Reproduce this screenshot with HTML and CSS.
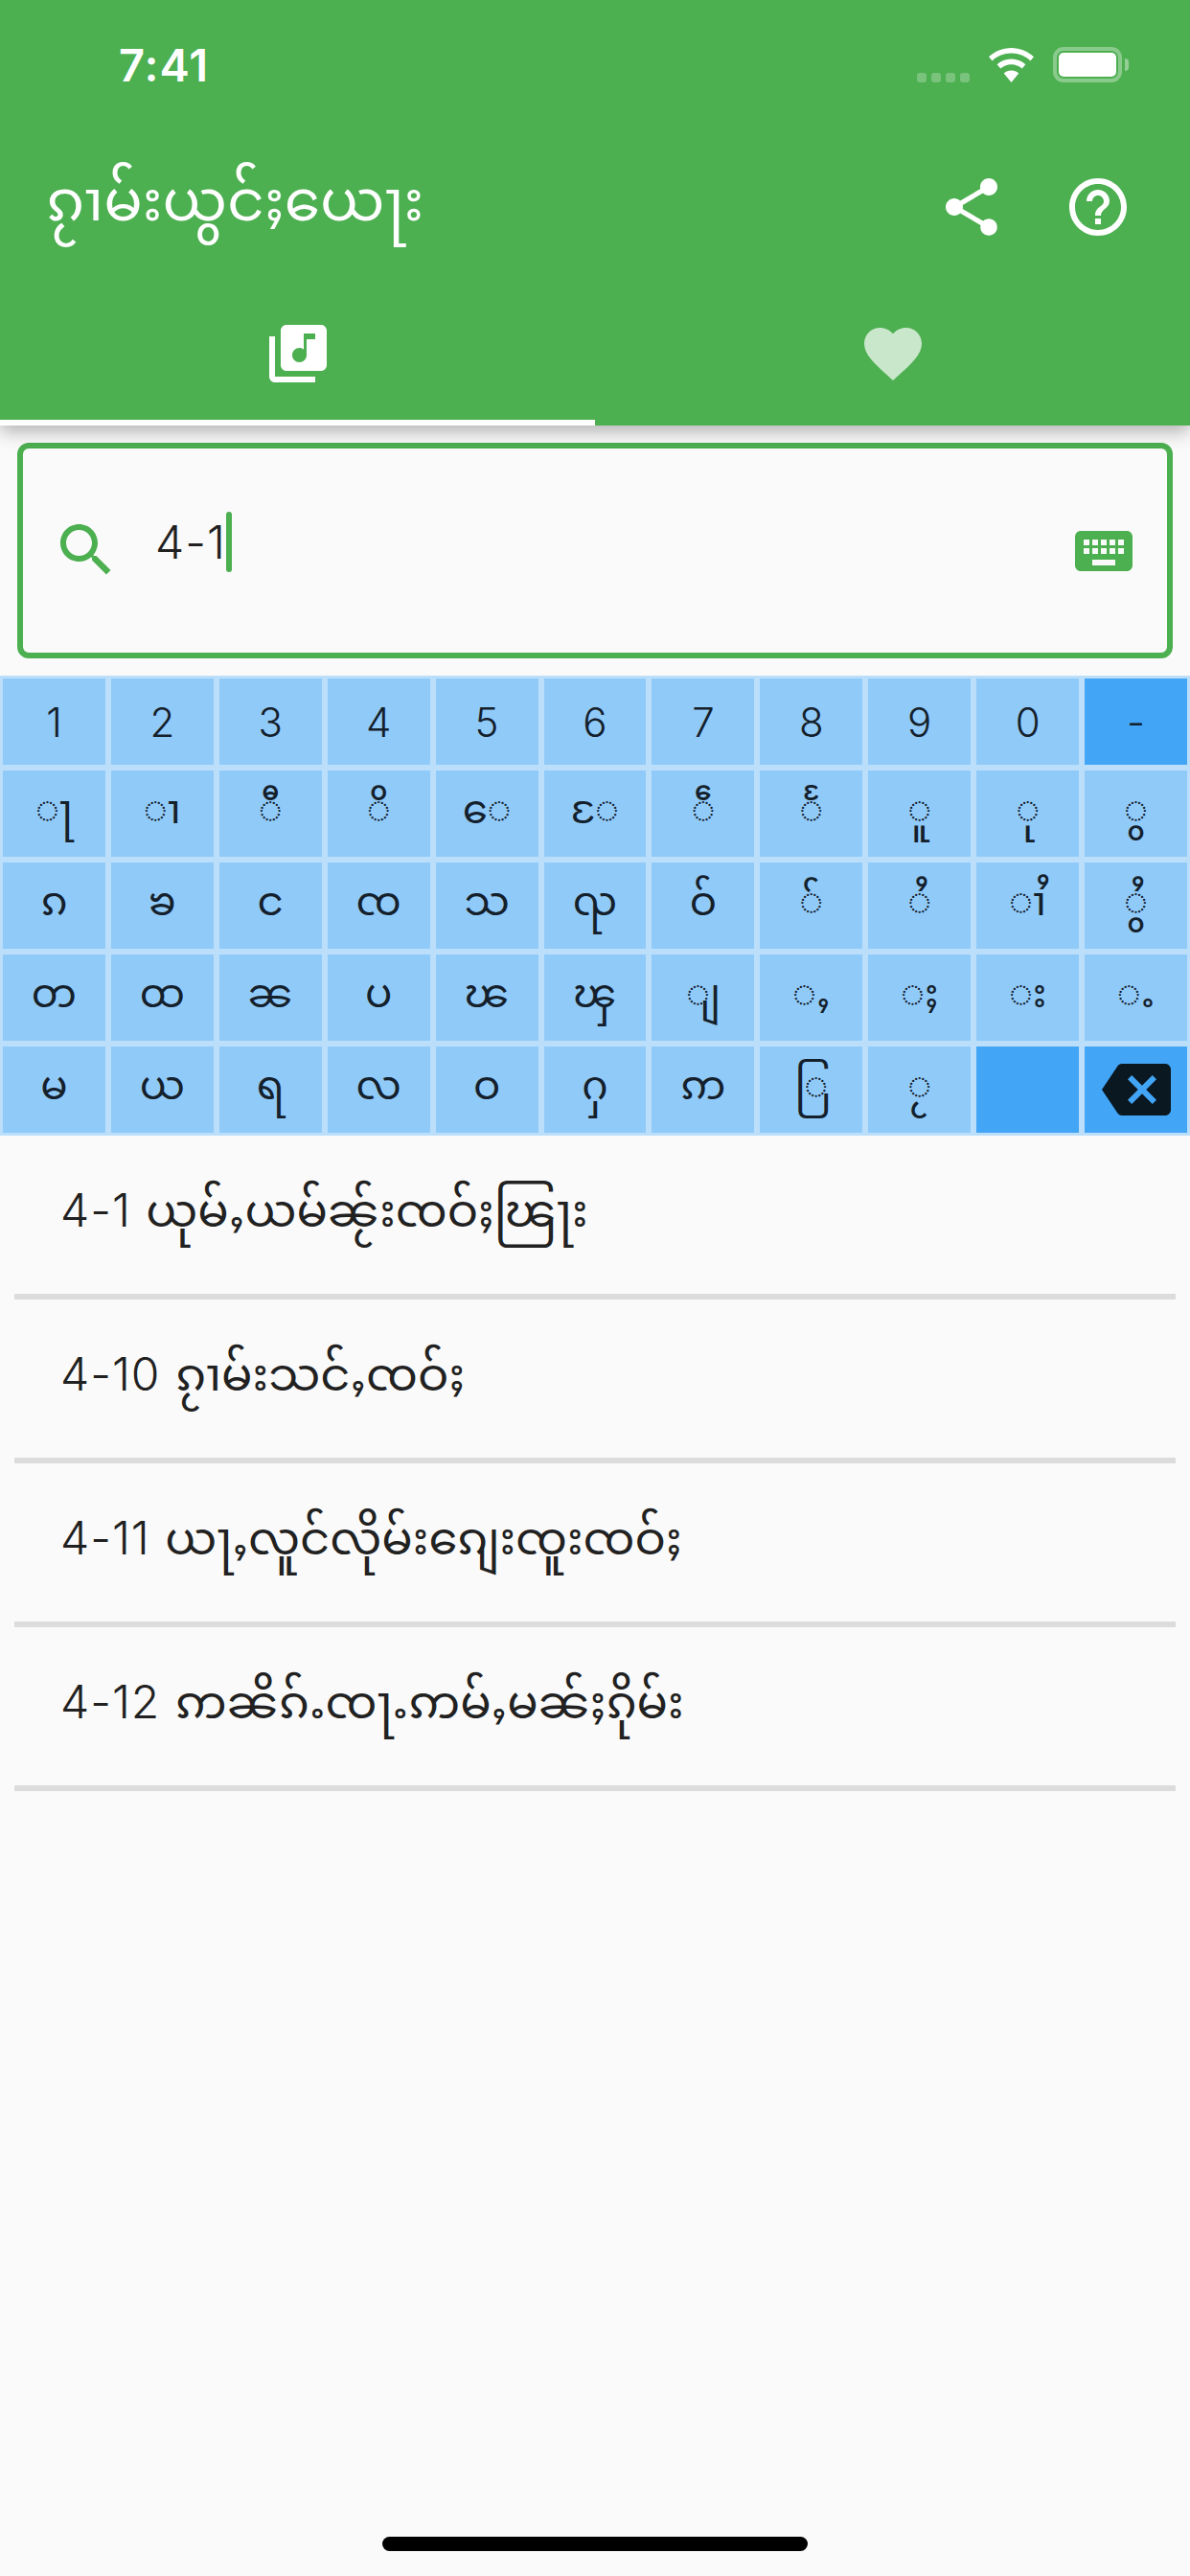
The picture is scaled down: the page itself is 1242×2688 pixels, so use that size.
FILE: index.html
```html
<!DOCTYPE html>
<html lang="shn">
<head>
<meta charset="utf-8">
<title>ၵႂၢမ်းယွင်ႈယေႃး</title>
<link rel="stylesheet" href="styles.css">
</head>
<body>
<div class="phone">
  <header class="appbar">
    <div class="status">
      <span class="time">7:41</span>
      <div class="status-icons">
        <div class="signal"><i></i><i></i><i></i><i></i></div>
        <svg class="wifi" viewBox="0 0 47 36"><path fill="#fff" d="M23.5 0C14.5 0 6.3 3.5 0 9.3l3.6 4.1C8.9 8.6 15.9 5.6 23.5 5.6s14.6 3 19.9 7.8L47 9.3C40.7 3.5 32.5 0 23.5 0zM23.5 11.500c-5.700 0-10.900 2.200-14.900 5.800l3.700 4.200c3-2.700 6.900-4.300 11.200-4.300s8.200 1.600 11.200 4.300l3.700-4.200c-4-3.600-9.200-5.800-14.900-5.800zM23.500 23.500c-3 0-5.700 1.100-7.800 3L23.500 36l7.800-9.500c-2.100-1.900-4.800-3-7.800-3z"/></svg>
        <div class="battery"><div class="battery-body"><div class="battery-level"></div></div><div class="battery-nub"></div></div>
      </div>
    </div>
    <div class="toolbar">
      <h1 class="title">ၵႂၢမ်းယွင်ႈယေႃး</h1>
      <div class="actions">
        <svg class="icon" viewBox="0 0 24 24"><path fill="#fff" d="M18 16.080c-.76 0-1.440.3-1.960.77L8.910 12.700c.05-.23.09-.46.09-.7s-.04-.47-.09-.7l7.050-4.110c.54.5 1.250.81 2.040.81 1.660 0 3-1.340 3-3s-1.340-3-3-3-3 1.340-3 3c0 .24.04.47.09.7L8.040 9.810C7.500 9.310 6.790 9 6 9c-1.660 0-3 1.340-3 3s1.340 3 3 3c.79 0 1.500-.31 2.040-.81l7.120 4.160c-.05.21-.08.43-.08.65 0 1.610 1.310 2.920 2.920 2.920 1.610 0 2.920-1.310 2.920-2.920s-1.310-2.920-2.920-2.920z"/></svg>
        <svg class="icon" viewBox="0 0 24 24"><path fill="#fff" d="M11 18h2v-2h-2v2zm1-16C6.480 2 2 6.480 2 12s4.480 10 10 10 10-4.480 10-10S17.520 2 12 2zm0 18c-4.410 0-8-3.590-8-8s3.590-8 8-8 8 3.590 8 8-3.590 8-8 8zm0-14c-2.210 0-4 1.790-4 4h2c0-1.100.9-2 2-2s2 .9 2 2c0 2-3 1.750-3 5h2c0-2.250 3-2.500 3-5 0-2.210-1.790-4-4-4z"/></svg>
      </div>
    </div>
    <div class="tabs">
      <div class="tab tab-active">
        <svg class="icon" viewBox="0 0 24 24"><path fill="#fff" d="M20 2H8c-1.100 0-2 .9-2 2v12c0 1.100.9 2 2 2h12c1.100 0 2-.9 2-2V4c0-1.100-.9-2-2-2zm-2 5h-3v5.500c0 1.380-1.120 2.500-2.500 2.500S10 13.880 10 12.500s1.120-2.500 2.500-2.500c.57 0 1.080.19 1.500.51V5h4v2zM4 6H2v14c0 1.100.9 2 2 2h14v-2H4V6z"/></svg>
      </div>
      <div class="tab">
        <svg class="icon icon-dim" viewBox="0 0 24 24"><path fill="#fff" d="M12 21.350l-1.450-1.320C5.400 15.360 2 12.280 2 8.500 2 5.420 4.420 3 7.500 3c1.740 0 3.410.81 4.500 2.090C13.090 3.810 14.760 3 16.500 3 19.580 3 22 5.420 22 8.500c0 3.780-3.400 6.860-8.550 11.540L12 21.350z"/></svg>
      </div>
    </div>
  </header>

  <div class="search">
    <svg class="icon search-icon" viewBox="0 0 24 24"><path fill="#4caf50" d="M15.500 14h-.79l-.28-.27C15.410 12.590 16 11.110 16 9.500 16 5.910 13.090 3 9.500 3S3 5.910 3 9.500 5.910 16 9.500 16c1.610 0 3.090-.59 4.230-1.570l.27.28v.79l5 4.990L20.490 19l-4.990-5zm-6 0C7.010 14 5 11.990 5 9.500S7.010 5 9.500 5 14 7.010 14 9.500 11.990 14 9.500 14z"/></svg>
    <div class="field"><span class="query num">4-1</span><span class="caret"></span></div>
    <svg class="icon kb-icon" viewBox="0 0 24 24"><path fill="#4caf50" d="M20 5H4c-1.100 0-1.990.9-1.990 2L2 17c0 1.100.9 2 2 2h16c1.100 0 2-.9 2-2V7c0-1.100-.9-2-2-2zm-9 3h2v2h-2V8zm0 3h2v2h-2v-2zM8 8h2v2H8V8zm0 3h2v2H8v-2zm-1 2H5v-2h2v2zm0-3H5V8h2v2zm9 7H8v-2h8v2zm0-4h-2v-2h2v2zm0-3h-2V8h2v2zm3 3h-2v-2h2v2zm0-3h-2V8h2v2z"/></svg>
  </div>

  <div class="keyboard">
    <div class="key key-digit">1</div><div class="key key-digit">2</div><div class="key key-digit">3</div><div class="key key-digit">4</div><div class="key key-digit">5</div><div class="key key-digit">6</div><div class="key key-digit">7</div><div class="key key-digit">8</div><div class="key key-digit">9</div><div class="key key-digit">0</div><div class="key key-digit key-dark">-</div>
    <div class="key">◌ႃ</div><div class="key">◌ၢ</div><div class="key">◌ီ</div><div class="key">◌ိ</div><div class="key">◌ေ</div><div class="key">◌ႄ</div><div class="key">◌ဵ</div><div class="key">◌ႅ</div><div class="key">◌ူ</div><div class="key">◌ု</div><div class="key">◌ွ</div>
    <div class="key">ၵ</div><div class="key">ၶ</div><div class="key">င</div><div class="key">ၸ</div><div class="key">သ</div><div class="key">ၺ</div><div class="key">ဝ်</div><div class="key">◌်</div><div class="key">◌ႆ</div><div class="key">◌ၢႆ</div><div class="key">◌ွႆ</div>
    <div class="key">တ</div><div class="key">ထ</div><div class="key">ၼ</div><div class="key">ပ</div><div class="key">ၽ</div><div class="key">ၾ</div><div class="key">◌ျ</div><div class="key">◌ႇ</div><div class="key">◌ႈ</div><div class="key">◌း</div><div class="key">◌ႉ</div>
    <div class="key">မ</div><div class="key">ယ</div><div class="key">ရ</div><div class="key">လ</div><div class="key">ဝ</div><div class="key">ႁ</div><div class="key">ဢ</div><div class="key">◌ြ</div><div class="key">◌ႂ</div><div class="key key-dark"></div>
    <div class="key key-dark"><svg class="bs-icon" viewBox="0 0 24 24"><path fill="#0a1822" d="M22 3H7c-.69 0-1.230.35-1.590.88L0 12l5.410 8.110c.36.53.9.89 1.590.89h15c1.100 0 2-.9 2-2V5c0-1.100-.9-2-2-2zm-3 12.590L17.590 17 14 13.410 10.410 17 9 15.590 12.590 12 9 8.410 10.410 7 14 10.590 17.590 7 19 8.410 15.410 12 19 15.590z"/></svg></div>
  </div>

  <ul class="songs">
    <li class="song"><span class="num">4-1</span> ယုမ်ႇယမ်ၼႂ်းၸဝ်ႈၽြႃး</li>
    <li class="song"><span class="num">4-10</span> ၵႂၢမ်းသင်ႇၸဝ်ႈ</li>
    <li class="song"><span class="num">4-11</span> ယႃႇလူင်လိုမ်းၵျေးၸူးၸဝ်ႈ</li>
    <li class="song"><span class="num">4-12</span> ဢၼိၵ်ႉၸႃႉဢမ်ႇမၼ်ႈၵိုမ်း</li>
  </ul>

  <div class="home-bar"></div>
</div>
</body>
</html>
```
FILE: styles.css
```css
* { box-sizing: border-box; }
html, body { margin: 0; padding: 0; }
body { background: #fafafa; font-family: Inter, "Noto Sans Myanmar", "Noto Sans", Roboto, "DejaVu Sans", sans-serif; color: #212121; }
.phone { position: relative; width: 1242px; height: 2688px; background: #fafafa; overflow: hidden; display: flex; flex-direction: column; }

.appbar { background: #4caf50; box-shadow: 0 6px 18px rgba(0,0,0,.3); position: relative; z-index: 1; }
.status { height: 132px; display: flex; justify-content: space-between; padding: 41px 64px 0 124px; }
.time { font: 600 47px/54px Inter, sans-serif; color: #fff; letter-spacing: 1px; }
.status-icons { display: flex; align-items: flex-end; height: 45px; }
.signal { display: flex; gap: 5px; margin-right: 20px; }
.signal i { display: block; width: 10px; height: 10px; border-radius: 3px; background: rgba(255,255,255,.25); }
.wifi { width: 47px; height: 36px; margin-right: 20px; }
.battery { display: flex; align-items: center; }
.battery-body { width: 72px; height: 37px; border: 4px solid rgba(255,255,255,.35); border-radius: 11px; padding: 2px; }
.battery-level { height: 100%; background: #fff; border-radius: 5px; }
.battery-nub { width: 4px; height: 13px; margin-left: 3px; background: rgba(255,255,255,.4); border-radius: 0 4px 4px 0; }

.toolbar { height: 168px; display: flex; align-items: center; justify-content: space-between; padding: 0 60px 0 48px; }
.title { margin: 0 0 16px; font-size: 60px; line-height: 80px; font-weight: 400; color: #fff; }
.actions { display: flex; gap: 60px; }
.icon { display: block; width: 72px; height: 72px; }
.icon-dim { opacity: .7; }

.tabs { height: 144px; display: flex; }
.tab { flex: 1; padding-top: 33px; display: flex; justify-content: center; }
.tab-active { border-bottom: 6px solid #fff; }

.search { margin: 18px 18px 0; height: 225px; border: 6px solid #4caf50; border-radius: 12px; display: flex; padding: 70px 30px 0; }
.search-icon { flex: none; margin-right: 36px; }
.field { flex: 1; display: flex; height: 63px; margin-top: -4px; }
.num { font-weight: 300; letter-spacing: 1px; }
.query { font-size: 48px; line-height: 63px; }
.caret { display: block; width: 6px; height: 63px; background: #4caf50; border-radius: 3px; }
.kb-icon { flex: none; margin-top: 1px; }

.keyboard { margin-top: 18px; height: 480px; background: #bbdefb; padding: 3px; display: grid; grid-template-columns: repeat(11, 1fr); grid-template-rows: repeat(5, 90px); gap: 6px; }
.key { background: #90caf9; display: flex; align-items: center; justify-content: center; font-size: 42px; color: #14202b; }
.key-digit { font-weight: 300; }
.key-dark { background: #42a5f5; }
.bs-icon { width: 72px; height: 72px; }

.songs { list-style: none; margin: 0; padding: 0 15px; }
.song { height: 171px; border-bottom: 6px solid #dcdcdc; padding-left: 48px; display: block; line-height: 155px; font-size: 48px; word-spacing: 2px; color: #212121; }

.home-bar { position: absolute; left: 399px; bottom: 26px; width: 444px; height: 15px; border-radius: 8px; background: #000; }
```
